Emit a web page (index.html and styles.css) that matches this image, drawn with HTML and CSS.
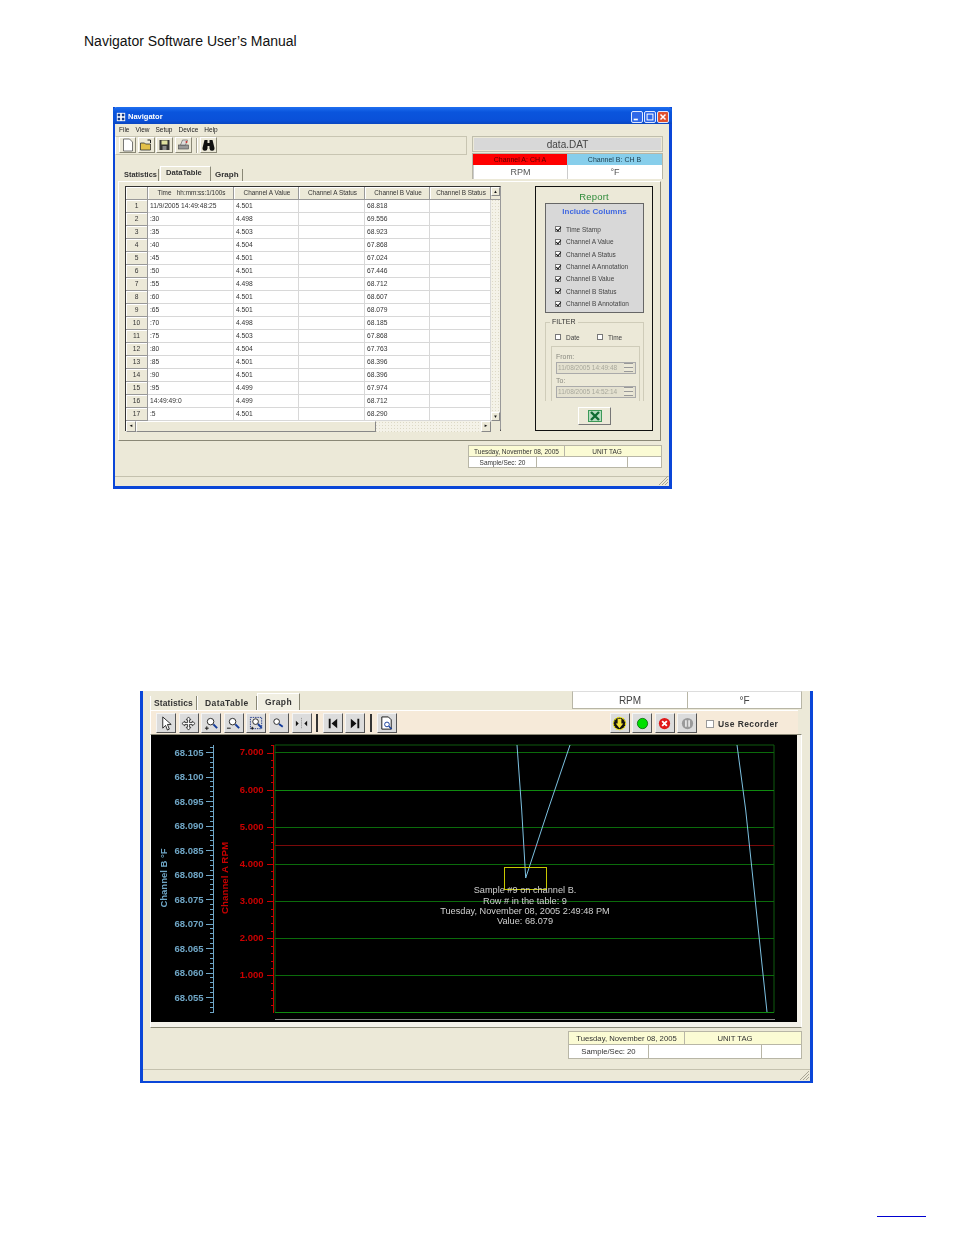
FILE: index.html
```html
<!DOCTYPE html>
<html lang="en">
<head>
<meta charset="utf-8">
<title>Navigator Software User's Manual</title>
<link rel="stylesheet" href="styles.css">
</head>
<body>
<header class="doc-head">Navigator Software User’s Manual</header>

<section class="win win-a">
  <div class="titlebar">
    <svg class="app-ico" viewBox="0 0 12 12"><rect x="1" y="1" width="10" height="10" fill="#fff"/><path d="M2 2h3v3H2zM7 2h3v3H7zM2 7h3v3H2zM7 7h3v3H7z" fill="#123a8a"/></svg>
    <span class="title-text">Navigator</span>
    <span class="caps">
      <span class="cap"><svg viewBox="0 0 12 12"><rect x="2" y="8" width="5" height="2" fill="#fff"/></svg></span>
      <span class="cap"><svg viewBox="0 0 12 12"><rect x="2.500" y="2.500" width="7" height="7" fill="none" stroke="#fff" stroke-width="1.200"/></svg></span>
      <span class="cap cap-x"><svg viewBox="0 0 12 12"><path d="M3 3l6 6M9 3l-6 6" stroke="#fff" stroke-width="1.800"/></svg></span>
    </span>
  </div>
  <nav class="menu"><span>File</span><span>View</span><span>Setup</span><span>Device</span><span>Help</span></nav>

  <div class="top-row">
    <div class="top-left">
      <div class="toolbar-a">
        <span class="tb"><svg viewBox="0 0 14 14"><path d="M3 1h6l3 3v9H3z" fill="#fff" stroke="#555" stroke-width=".8"/></svg></span>
        <span class="tb"><svg viewBox="0 0 14 14"><path d="M1 5h4l1 1h5v6H1z" fill="#e3c04a" stroke="#333" stroke-width=".8"/><path d="M8 2l3 0v3" fill="none" stroke="#222"/></svg></span>
        <span class="tb"><svg viewBox="0 0 14 14"><rect x="2" y="2" width="10" height="10" fill="#333"/><rect x="4" y="2.500" width="6" height="4" fill="#dfe0a0"/><rect x="5" y="8" width="4" height="4" fill="#888"/></svg></span>
        <span class="tb"><svg viewBox="0 0 14 14"><rect x="2" y="7" width="10" height="4" fill="#999" stroke="#444" stroke-width=".6"/><path d="M4 7l2-5h5l-2 5z" fill="#ddd" stroke="#555" stroke-width=".6"/><circle cx="10" cy="4" r="1" fill="#c33"/></svg></span>
        <span class="tb-sep"></span>
        <span class="tb"><svg viewBox="0 0 14 14"><path d="M3 2h3v3h2V2h3l2 8a2.500 2.500 0 0 1-5 .5V8H6v2.500a2.500 2.500 0 0 1-5-.5z" fill="#111"/></svg></span>
      </div>
      <div class="tabs-a">
        <span class="tab">Statistics</span><span class="tab tab-on">DataTable</span><span class="tab">Graph</span>
      </div>
    </div>
    <div class="info-a">
      <div class="file-box"><span>data.DAT</span></div>
      <div class="chan-grid">
        <span class="c-red">Channel A: CH A</span><span class="c-blue">Channel B: CH B</span>
        <span class="c-unit">RPM</span><span class="c-unit">°F</span>
      </div>
    </div>
  </div>

  <div class="panel-a">
    <div class="grid-wrap">
      <div class="data-grid">
        <div class="row head"><span class="rh"></span><span class="ctr">Time   hh:mm:ss:1/100s</span><span class="ctr">Channel A Value</span><span class="ctr">Channel A Status</span><span class="ctr">Channel B Value</span><span class="ctr">Channel B Status</span></div>
        <div class="row"><span class="rh">1</span><span>11/9/2005 14:49:48:25</span><span>4.501</span><span></span><span>68.818</span><span></span></div>
        <div class="row"><span class="rh">2</span><span>:30</span><span>4.498</span><span></span><span>69.556</span><span></span></div>
        <div class="row"><span class="rh">3</span><span>:35</span><span>4.503</span><span></span><span>68.923</span><span></span></div>
        <div class="row"><span class="rh">4</span><span>:40</span><span>4.504</span><span></span><span>67.868</span><span></span></div>
        <div class="row"><span class="rh">5</span><span>:45</span><span>4.501</span><span></span><span>67.024</span><span></span></div>
        <div class="row"><span class="rh">6</span><span>:50</span><span>4.501</span><span></span><span>67.446</span><span></span></div>
        <div class="row"><span class="rh">7</span><span>:55</span><span>4.498</span><span></span><span>68.712</span><span></span></div>
        <div class="row"><span class="rh">8</span><span>:60</span><span>4.501</span><span></span><span>68.607</span><span></span></div>
        <div class="row"><span class="rh">9</span><span>:65</span><span>4.501</span><span></span><span>68.079</span><span></span></div>
        <div class="row"><span class="rh">10</span><span>:70</span><span>4.498</span><span></span><span>68.185</span><span></span></div>
        <div class="row"><span class="rh">11</span><span>:75</span><span>4.503</span><span></span><span>67.868</span><span></span></div>
        <div class="row"><span class="rh">12</span><span>:80</span><span>4.504</span><span></span><span>67.763</span><span></span></div>
        <div class="row"><span class="rh">13</span><span>:85</span><span>4.501</span><span></span><span>68.396</span><span></span></div>
        <div class="row"><span class="rh">14</span><span>:90</span><span>4.501</span><span></span><span>68.396</span><span></span></div>
        <div class="row"><span class="rh">15</span><span>:95</span><span>4.499</span><span></span><span>67.974</span><span></span></div>
        <div class="row"><span class="rh">16</span><span>14:49:49:0</span><span>4.499</span><span></span><span>68.712</span><span></span></div>
        <div class="row"><span class="rh">17</span><span>:5</span><span>4.501</span><span></span><span>68.290</span><span></span></div>
      </div>
      <div class="vscroll"><span class="arrow">▲</span><span class="v-thumb"></span><span class="v-track"></span><span class="arrow">▼</span></div>
      <div class="hscroll"><span class="arrow-h">◄</span><span class="h-thumb"></span><span class="h-track"></span><span class="arrow-h">►</span></div>
      <span class="corner"></span>
    </div>

    <aside class="report">
      <div class="rep-title">Report</div>
      <div class="inc">
        <div class="inc-title">Include Columns</div>
        <label class="chk"><i class="box on"></i>Time Stamp</label>
        <label class="chk"><i class="box on"></i>Channel A Value</label>
        <label class="chk"><i class="box on"></i>Channel A Status</label>
        <label class="chk"><i class="box on"></i>Channel A Annotation</label>
        <label class="chk"><i class="box on"></i>Channel B Value</label>
        <label class="chk"><i class="box on"></i>Channel B Status</label>
        <label class="chk"><i class="box on"></i>Channel B Annotation</label>
      </div>
      <div class="filter">
        <span class="legend">FILTER</span>
        <div class="filter-checks">
          <label class="chk"><i class="box"></i>Date</label>
          <label class="chk"><i class="box"></i>Time</label>
        </div>
        <div class="range">
          <div class="rng-label">From:</div>
          <div class="rng-input"><span>11/08/2005 14:49:48</span><b class="spin"></b></div>
          <div class="rng-label">To:</div>
          <div class="rng-input"><span>11/08/2005 14:52:14</span><b class="spin"></b></div>
        </div>
      </div>
      <div class="xl-btn"><svg viewBox="0 0 14 12"><rect width="14" height="12" fill="#3d9a58"/><rect x="1" y="1" width="12" height="10" fill="#b7dcc0"/><path d="M3 2l8 8M11 2l-8 8" stroke="#0f6b32" stroke-width="2.400"/></svg></div>
    </aside>
  </div>

  <div class="foot-a">
    <div class="stat stat-a">
      <span class="y s1">Tuesday, November 08, 2005</span><span class="y s2">UNIT TAG</span>
      <span class="s3">Sample/Sec: 20</span><span class="s4"></span><span class="s5"></span>
    </div>
  </div>
  <div class="statusbar"><svg class="grip" viewBox="0 0 11 11"><path d="M10 1L1 10M10 4l-6 6M10 7l-3 3" stroke="#a8a595" stroke-width="1"/></svg></div>
</section>

<section class="win win-b">
  <div class="top-b">
    <div class="tabs-b"><span class="tabb">Statistics</span><span class="tabb">DataTable</span><span class="tabb tabb-on">Graph</span></div>
    <div class="units-b"><span>RPM</span><span>°F</span></div>
  </div>
  <div class="strip">
    <span class="gb"><svg viewBox="0 0 16 16"><path d="M4 1v12l3-3 2 5 2-1-2-5h4z" fill="#fff" stroke="#111" stroke-width=".9"/></svg></span>
    <span class="gb"><svg viewBox="0 0 16 16"><path d="M8 1l2.500 3H9v3h3V5.500L15 8l-3 2.500V9H9v3h1.500L8 15l-2.500-3H7V9H4v1.500L1 8l3-2.500V7h3V4H5.500z" fill="#fff" stroke="#111" stroke-width=".8"/></svg></span>
    <span class="gb"><svg viewBox="0 0 16 16"><circle cx="7" cy="6" r="3.500" fill="#fff" stroke="#222"/><path d="M10 9l4 4" stroke="#123a9a" stroke-width="2"/><path d="M1 13h4M3 11v4" stroke="#111"/></svg></span>
    <span class="gb"><svg viewBox="0 0 16 16"><circle cx="7" cy="6" r="3.500" fill="#fff" stroke="#222"/><path d="M10 9l4 4" stroke="#123a9a" stroke-width="2"/><path d="M1 13h4" stroke="#111"/></svg></span>
    <span class="gb"><svg viewBox="0 0 16 16"><rect x="1.500" y="1.500" width="12" height="12" fill="none" stroke="#223a8a" stroke-dasharray="1.500 1"/><circle cx="7" cy="6" r="3" fill="#fff" stroke="#222"/><path d="M9.500 8.500l4 4" stroke="#123a9a" stroke-width="2"/><path d="M2 13h3M3.500 11.500v3" stroke="#111"/></svg></span>
    <span class="gb"><svg viewBox="0 0 16 16"><circle cx="6" cy="6" r="3" fill="#fff" stroke="#222"/><path d="M8.500 8.500l4 3" stroke="#123a9a" stroke-width="2"/></svg></span>
    <span class="gb"><svg viewBox="0 0 16 16"><path d="M2 5v6l3-3zM14 5v6l-3-3z" fill="#111"/><path d="M8 2v12" stroke="#888" stroke-dasharray="1 1"/></svg></span>
    <span class="gsep"></span>
    <span class="gb"><svg viewBox="0 0 16 16"><path d="M4 3h2v10H4zM13 3v10L7 8z" fill="#111"/></svg></span>
    <span class="gb"><svg viewBox="0 0 16 16"><path d="M10 3h2v10h-2zM3 3v10l6-5z" fill="#111"/></svg></span>
    <span class="gsep"></span>
    <span class="gb"><svg viewBox="0 0 16 16"><path d="M3 1h7l3 3v10H3z" fill="#fff" stroke="#111"/><circle cx="8.500" cy="9" r="2.500" fill="none" stroke="#123a9a"/><path d="M10.500 11l3 3" stroke="#123a9a" stroke-width="1.500"/></svg></span>
    <span class="strip-gap"></span>
    <span class="gb"><svg viewBox="0 0 16 16"><circle cx="8" cy="8" r="6.500" fill="#111" stroke="#e8e000" stroke-width="1.300" stroke-dasharray="2 1"/><path d="M6 3h4v5h2l-4 5-4-5h2z" fill="#f3e23a"/></svg></span>
    <span class="gb"><svg viewBox="0 0 16 16"><circle cx="8" cy="8" r="5.500" fill="#00e000" stroke="#0a5a0a" stroke-width=".8"/></svg></span>
    <span class="gb"><svg viewBox="0 0 16 16"><circle cx="8" cy="8" r="6" fill="#e01818"/><path d="M5.500 5.500l5 5M10.500 5.500l-5 5" stroke="#fff" stroke-width="2"/></svg></span>
    <span class="gb"><svg viewBox="0 0 16 16"><circle cx="8" cy="8" r="6" fill="#9a9a9a"/><path d="M6.300 4.500v7M9.700 4.500v7" stroke="#e8e8e8" stroke-width="1.800"/></svg></span>
    <label class="rec"><i class="rec-box"></i>Use Recorder</label>
  </div>
  <div class="plot-frame">
    <svg class="plot" viewBox="151 735 646 287">
      <rect x="151" y="735" width="646" height="287" fill="#000"/>
      <g id="ticks"></g>
      <path d="M275 745h499v267.500H275z" fill="none" stroke="#0e5a0e"/>
      <path class="grid" d="M275 752.500h499M275 827.500h499M275 864.500h499M275 901.500h499M275 938.500h499M275 975.500h499"/>
      <path class="grid-b" d="M275 790.500h499M275 1012.500h499"/>
      <path d="M275 845.500h499" stroke="#7a0a0a"/>
      <path d="M275 1019.500h500" stroke="#8c8c8c"/>
      <path class="trace" d="M517 745L521.700 810 525.700 878 548 810 570 745M737 745L745.700 810 767 1012"/>
      <rect x="504.500" y="867.500" width="42" height="22" fill="none" stroke="#c8c800"/>
      <g class="b-num">
        <text x="203.500" y="755.500">68.105</text><text x="203.500" y="780">68.100</text><text x="203.500" y="804.500">68.095</text><text x="203.500" y="829">68.090</text><text x="203.500" y="853.500">68.085</text><text x="203.500" y="878">68.080</text><text x="203.500" y="902.500">68.075</text><text x="203.500" y="927">68.070</text><text x="203.500" y="951.500">68.065</text><text x="203.500" y="976">68.060</text><text x="203.500" y="1000.500">68.055</text>
      </g>
      <g class="a-num">
        <text x="263.500" y="755">7.000</text><text x="263.500" y="792.500">6.000</text><text x="263.500" y="830">5.000</text><text x="263.500" y="867">4.000</text><text x="263.500" y="904">3.000</text><text x="263.500" y="941">2.000</text><text x="263.500" y="978">1.000</text>
      </g>
      <text class="ax-b" transform="translate(167 878) rotate(-90)">Channel B °F</text>
      <text class="ax-a" transform="translate(228 878) rotate(-90)">Channel A RPM</text>
      <g class="tip">
        <text x="525" y="893">Sample #9 on channel B.</text>
        <text x="525" y="903.500">Row # in the table: 9</text>
        <text x="525" y="913.500">Tuesday, November 08, 2005 2:49:48 PM</text>
        <text x="525" y="924">Value: 68.079</text>
      </g>
    </svg>
  </div>
  <div class="foot-b">
    <div class="stat stat-b">
      <span class="y s1">Tuesday, November 08, 2005</span><span class="y s2">UNIT TAG</span>
      <span class="s3">Sample/Sec: 20</span><span class="s4"></span><span class="s5"></span>
    </div>
  </div>
  <div class="statusbar sb-b"><svg class="grip" viewBox="0 0 11 11"><path d="M10 1L1 10M10 4l-6 6M10 7l-3 3" stroke="#a8a595" stroke-width="1"/></svg></div>
</section>

<footer class="doc-foot"><a class="toc" href="#">&nbsp;</a></footer>
<script src="ticks.js"></script>
</body>
</html>
```
FILE: ticks.js
```js
var g = document.getElementById('ticks');
var out = '';
function line(x1, y1, x2, y2, c) {
  out += '<path d="M' + x1 + ' ' + y1 + 'L' + x2 + ' ' + y2 + '" stroke="' + c + '"/>';
}
var blue = '#6fa6c6', red = '#c80000';
line(213.5, 745, 213.5, 1013, blue);
for (var i = 0; i < 55; i++) {
  var y = Math.round(752 + i * 4.9) + 0.5;
  if (y > 1013) break;
  line(i % 5 === 0 ? 206 : 210, y, 213, y, blue);
}
line(210, 747.5, 213, 747.5, blue);
line(273.5, 745, 273.5, 1013, red);
for (var j = -1; j < 36; j++) {
  var yy = Math.round(752.5 + j * 7.43) + 0.5;
  if (yy > 1013) break;
  line(j % 5 === 0 ? 267 : 271, yy, 273, yy, red);
}
g.innerHTML = out;
```
FILE: styles.css
```css
* { box-sizing: border-box; }
html, body { margin: 0; padding: 0; background: #fff; }
body { width: 954px; height: 1235px; overflow: hidden; font-family: "Liberation Sans", Arial, sans-serif; color: #222; }

.doc-head { margin: 33px 0 0 84px; height: 16px; font-size: 14px; line-height: 16px; color: #111; }

.win { background: #ece9d8; border-style: solid; border-color: #0a46d8; font-size: 7px; filter: blur(.3px); }
.win-a { width: 559px; height: 382px; margin: 58px 0 0 113px; border-width: 0 3px 3px 2px; display: flex; flex-direction: column; }

.titlebar { height: 17px; margin: 0 -3px 0 -2px; padding: 3px 3px 0 3px; border-radius: 4px 4px 0 0; background: linear-gradient(#1f6ff0, #0a55dd 30%, #0a50d8 80%, #0a46c0); display: flex; align-items: center; color: #fff; }
.app-ico { width: 10px; height: 10px; margin-right: 2px; }
.title-text { font-size: 7.500px; font-weight: bold; }
.caps { margin-left: auto; display: flex; gap: 1px; }
.cap { width: 12px; height: 12px; border: 1px solid #dfe8ff; border-radius: 2px; background: #2f68e8; display: block; }
.cap svg { display: block; width: 10px; height: 10px; }
.cap-x { background: #e0512e; }

.menu { height: 12px; display: flex; gap: 6px; padding: 0 0 0 4px; font-size: 6.500px; line-height: 11px; color: #222; }

.top-row { display: flex; height: 46px; }
.top-left { width: 352px; display: flex; flex-direction: column; justify-content: space-between; }
.toolbar-a { height: 19px; border: 1px solid #c8c5b2; border-left-color: #fff; display: flex; align-items: center; padding-left: 3px; gap: 1.500px; }
.tb { width: 17px; height: 16px; background: #ece9d8; border: 1px solid; border-color: #fff #8a8876 #8a8876 #fff; display: block; }
.tb svg { display: block; width: 15px; height: 14px; }
.tb-sep { width: 2px; height: 15px; margin: 0 0 0 3px; border-left: 1px solid #a8a595; border-right: 1px solid #fff; }
.info-a { margin-left: 5px; width: 191px; }
.file-box { height: 16px; border: 1px solid #c0beac; padding: 1px; }
.file-box span { display: block; height: 12px; background: #d8d8d8; text-align: center; font-size: 10px; line-height: 13px; color: #444; }
.chan-grid { margin-top: 1px; height: 26px; border: 1px solid #b8b6a6; display: grid; grid-template-columns: 94px 1fr; grid-template-rows: 11px 1fr; background: #fff; text-align: center; }
.chan-grid span { line-height: 11px; }
.c-red { background: #ff0000; color: #5a0000; }
.c-blue { background: #87ceeb; color: #1c3c4c; }
.c-unit { background: #fff; font-size: 9px; line-height: 14px !important; color: #555; border-left: 1px solid #ccc; }

.tabs-a { display: flex; align-items: flex-end; height: 17px; padding-left: 6px; font-weight: bold; font-size: 8px; color: #333; }
.tab { height: 12px; padding: 0 3px; line-height: 11px; border-right: 1px solid #8a8876; }
.tab:first-child { width: 38px; padding-right: 0; font-size: 7.400px; white-space: nowrap; }
.tab-on { height: 15px; width: 51px; margin: 0 1px 0 1px; padding: 0 0 0 5px; line-height: 11px; font-size: 7.600px; border: 1px solid #fff; border-right-color: #8a8876; border-bottom: 0; white-space: nowrap; }

.panel-a { width: 543px; height: 263px; margin-left: 3px; border: 1px solid; border-color: #fff #8a8876 #8a8876 #fff; display: flex; align-items: flex-start; padding: 4px 0 0 6px; }
.grid-wrap { width: 376px; height: 245px; border: 1px solid #333; border-right-color: #999; border-bottom-width: 2px; display: grid; grid-template-columns: 1fr 9px; grid-template-rows: 1fr 11px; background: #fff; }
.row { display: grid; grid-template-columns: 22px 86px 65px 66px 65px 61px; height: 13px; border-bottom: 1px solid #d8d8d8; color: #333; font-size: 6.700px; line-height: 12px; }
.row span { border-right: 1px solid #d8d8d8; padding-left: 2px; overflow: hidden; white-space: pre; }
.row .rh { background: #ece9d8; text-align: center; padding: 0; border-right: 1px solid #999; border-bottom: 1px solid #999; box-shadow: inset 1px 1px #fff; height: 13px; }
.head { background: #ece9d8; font-size: 6.400px; }
.head span { background: #ece9d8; border-right-color: #999; border-bottom: 1px solid #999; height: 13px; box-shadow: inset 1px 1px #fff; }
.ctr { text-align: center; }
.vscroll { display: flex; flex-direction: column; background: #f4f2e8; background-image: radial-gradient(#ddd9c6 .6px, transparent .7px); background-size: 3px 3px; }
.arrow, .arrow-h { display: block; background: #ece9d8; border: 1px solid; border-color: #fff #888 #888 #fff; font-size: 4.500px; line-height: 8px; text-align: center; color: #111; }
.arrow { height: 9px; }
.v-thumb { height: 4px; background: #ece9d8; border-bottom: 1px solid #999; }
.v-track { flex: 1; }
.hscroll { display: flex; background: #f4f2e8; background-image: radial-gradient(#ddd9c6 .6px, transparent .7px); background-size: 3px 3px; }
.arrow-h { width: 10px; }
.h-thumb { width: 240px; background: #ece9d8; border: 1px solid; border-color: #fff #888 #888 #fff; }
.h-track { flex: 1; }
.corner { background: #ece9d8; }

.report { width: 118px; height: 245px; margin-left: 34px; border: 1px solid #111; padding: 0 9px; display: flex; flex-direction: column; }
.rep-title { height: 16px; padding-top: 5px; text-align: center; color: #2e8b3a; font-size: 9.500px; line-height: 10px; letter-spacing: .2px; }
.inc { width: 99px; height: 110px; border: 1px solid #666; background: #d8d8d8; padding-left: 9px; }
.inc-title { margin: 3px 0 7px -9px; height: 9px; text-align: center; color: #4169e1; font-weight: bold; font-size: 8px; line-height: 9px; }
.chk { display: flex; align-items: center; height: 12.400px; color: #444; font-size: 6.500px; white-space: nowrap; }
.box { display: block; flex: none; width: 6px; height: 6px; margin-right: 5px; background: #fff; border: 1px solid #777; position: relative; }
.box.on::after { content: ""; display: block; width: 2px; height: 4px; margin: -1px 0 0 1px; border: solid #111; border-width: 0 1px 1px 0; transform: rotate(40deg); }
.filter { position: relative; margin-top: 9px; width: 99px; height: 79px; border: 1px solid #cfccb9; border-bottom: 0; padding: 9px 0 0 5px; }
.legend { position: absolute; top: -6px; left: 4px; padding: 0 2px; background: #ece9d8; font-size: 7px; line-height: 10px; color: #333; }
.filter-checks { display: flex; gap: 17px; height: 10px; padding-left: 4px; }
.filter-checks .chk { height: 10px; width: 25px; }
.range { width: 89px; height: 55px; margin: 4px 0 0 0; border: 1px solid #cfccb9; border-bottom: 0; padding: 6px 0 0 4px; color: #8a8a80; }
.rng-label { height: 7px; line-height: 7px; font-size: 7px; margin-bottom: 2px; }
.rng-input { width: 80px; height: 12px; margin-bottom: 3px; border: 1px solid #aaa; background: #e4e1d0; color: #a8a89c; font-size: 6.500px; line-height: 10px; padding-left: 1px; display: flex; justify-content: space-between; white-space: nowrap; overflow: hidden; }
.spin { display: block; width: 9px; height: 9px; margin: 0 2px 0 0; flex: none; border-top: 1px solid #999; border-bottom: 1px solid #999; background: linear-gradient(#ece9d8 45%, #999 45%, #999 55%, #ece9d8 55%); }
.xl-btn { width: 33px; height: 18px; margin: 6px 0 0 33px; background: #ece9d8; border: 1px solid; border-color: #fff #777 #777 #fff; display: flex; align-items: center; justify-content: center; }
.xl-btn svg { width: 14px; height: 12px; }

.foot-a { height: 35px; padding: 4px 0 0 353px; }
.stat { display: grid; border: 1px solid #b8b6a6; background: #fff; color: #333; text-align: center; white-space: nowrap; }
.stat-a { width: 194px; height: 23px; grid-template-columns: 68px 28px 63px 1fr; grid-template-rows: 11px 1fr; font-size: 6.500px; line-height: 11px; }
.stat-a .s2 { padding-right: 12px; }
.stat .y { background: #fbfbd4; border-bottom: 1px solid #b8b6a6; }
.s1 { grid-column: 1 / span 2; border-right: 1px solid #b8b6a6; }
.s2 { grid-column: 3 / span 2; }
.s3 { border-right: 1px solid #b8b6a6; }
.s4 { grid-column: 2 / span 2; border-right: 1px solid #b8b6a6; }
.statusbar { flex: 1; min-height: 10px; border-top: 1px solid #c4c1ae; position: relative; }
.grip { position: absolute; right: 0; bottom: 0; width: 11px; height: 11px; }

.win-b { width: 673px; height: 392px; margin: 202px 0 0 140px; border-width: 0 3px 2px 3px; display: flex; flex-direction: column; }
.top-b { height: 20px; display: flex; padding-left: 7px; }
.tabs-b { display: flex; align-items: flex-end; width: 422px; font-size: 8.500px; font-weight: bold; color: #333; letter-spacing: .4px; }
.tabb { height: 15px; line-height: 14px; padding: 0 3px; border-right: 1px solid #8a8876; border-left: 1px solid #fff; white-space: nowrap; }
.tabb:nth-child(1) { width: 47px; letter-spacing: .1px; }
.tabb:nth-child(2) { width: 60px; padding-left: 7px; }
.tabb-on { height: 18px; width: 43px; padding-left: 7px; line-height: 16px; background: #f1efe2; border-top: 1px solid #fff; }
.units-b { width: 230px; height: 18px; display: grid; grid-template-columns: 114px 1fr; background: #fff; border: 1px solid #b8b6a6; border-top-color: #ddd; text-align: center; font-size: 10px; line-height: 17px; color: #444; }
.units-b span + span { border-left: 1px solid #b8b6a6; }
.strip { height: 24px; margin: -1px 12px 0 7px; background: #f6ead9; border-left: 1px solid #fff; border-top: 1px solid #fff; display: flex; align-items: center; padding: 1px 0 0 5px; gap: 2.600px; }
.gb { width: 20px; height: 20px; background: #dcdcdc; border: 1px solid; border-color: #f4f4f4 #555 #555 #f4f4f4; display: flex; align-items: center; justify-content: center; flex: none; }
.gb svg { width: 15px; height: 15px; display: block; }
.gsep { width: 2px; height: 18px; margin: 0 2px; background: #333; flex: none; }
.strip-gap { flex: 1; }
.rec { display: flex; align-items: center; width: 92px; margin-left: 6px; padding-top: 1px; font-size: 8.500px; font-weight: bold; letter-spacing: .42px; color: #333; white-space: nowrap; }
.rec-box { display: block; flex: none; width: 8px; height: 8px; margin-right: 4px; background: #fff; border: 1px solid #999; }

.plot-frame { height: 294px; margin: 0 8px 0 7px; border: 1px solid; border-color: #8a8876 #fff #8a8876 #fff; padding: 0; background: #f4f2ea; }
.plot { display: block; width: 646px; height: 287px; }
.grid { stroke: #0b6b0b; fill: none; }
.grid-b { stroke: #0f8a0f; fill: none; }
.trace { stroke: #7cc0e0; fill: none; stroke-width: 1; }
.plot text { font-family: "Liberation Sans", Arial, sans-serif; }
.b-num text { fill: #6fa6c6; font-size: 9.500px; font-weight: bold; text-anchor: end; }
.a-num text { fill: #cc0000; font-size: 9.500px; font-weight: bold; text-anchor: end; }
.ax-b { fill: #6fa6c6; font-size: 9.500px; font-weight: bold; text-anchor: middle; }
.ax-a { fill: #c80000; font-size: 9.800px; font-weight: bold; text-anchor: middle; }
.tip text { fill: #d0d0d0; font-size: 9.200px; text-anchor: middle; }

.foot-b { height: 41px; padding: 3px 0 0 425px; }
.stat-b { width: 234px; height: 28px; grid-template-columns: 80px 36px 77px 1fr; grid-template-rows: 13px 1fr; font-size: 7.700px; line-height: 13px; }
.stat-b .s2 { padding-right: 16px; }
.sb-b { min-height: 12px; }

.doc-foot { margin: 133px 0 0 877px; width: 49px; }
.toc { display: block; height: 1px; overflow: hidden; background: #0000d0; font-size: 1px; }
```
